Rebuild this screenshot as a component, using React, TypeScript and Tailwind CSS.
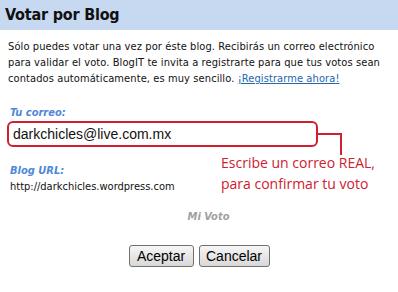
import React from 'react'

const body = { fontFamily: '"DejaVu Sans Condensed", "DejaVu Sans", sans-serif' }
const arial = { fontFamily: '"Liberation Sans", Arial, sans-serif' }

const App: React.FC = () => {
  return (
    <div className="w-[398px] h-[292px] bg-white overflow-hidden text-[#111]" style={body}>
      <div className="h-[30px] bg-[#c6d9f1] pl-[5px] flex items-center">
        <h1 className="text-[16px] font-bold leading-none tracking-[-0.2px]">Votar por Blog</h1>
      </div>

      <div className="relative px-[8px] pt-[9px]">
        <p className="text-[11px] leading-[16px] tracking-[0.1px] whitespace-nowrap">
          Sólo puedes votar una vez por éste blog. Recibirás un correo electrónico
          <br />
          para validar el voto. BlogIT te invita a registrarte para que tus votos sean
          <br />
          contados automáticamente, es muy sencillo.{' '}
          <a href="#" className="text-[#2466b0] underline">¡Registrarme ahora!</a>
        </p>

        <div className="mt-[18px] pl-[2px] text-[11px] leading-[16px] font-bold italic text-[#4d88d6]">
          Tu correo:
        </div>
        <div className="-ml-[1px] w-[311px] h-[26px] rounded-[6px] border-2 border-[#d0202f] flex items-center px-[4px]">
          <span className="text-[14px] leading-none" style={arial}>darkchicles@live.com.mx</span>
        </div>

        <div className="mt-[16px] pl-[2px] text-[11px] leading-[16px] font-bold italic text-[#4d88d6]">
          Blog URL:
        </div>
        <div className="pl-[2px] text-[11px] leading-[15px]">http://darkchicles.wordpress.com</div>

        <div className="mt-[15px] text-center text-[11px] leading-[16px] font-bold italic text-[#a0a0a0] pl-[19px]">
          Mi Voto
        </div>

        <div className="mt-[20px] flex justify-center gap-[5px]">
          <button
            className="w-[65px] h-[22px] rounded-[3px] border border-[#707070] bg-gradient-to-b from-[#f6f6f6] to-[#d8d8d8] text-[14px] text-black"
            style={arial}
          >
            Aceptar
          </button>
          <button
            className="w-[71px] h-[22px] rounded-[3px] border border-[#707070] bg-gradient-to-b from-[#f6f6f6] to-[#d8d8d8] text-[14px] text-black"
            style={arial}
          >
            Cancelar
          </button>
        </div>

        {/* red callout over the form */}
        <div className="absolute left-[317px] top-[103px] w-[25px] h-[22px] border-t-2 border-r-2 border-[#d0202f]" />
        <div
          className="absolute left-[221px] top-[122px] text-[14px] leading-[21px] text-[#d0202f]"
          style={{ fontFamily: '"Open Sans", sans-serif' }}
        >
          <div>Escribe un correo REAL,</div>
          <div>para confirmar tu voto</div>
        </div>
      </div>
    </div>
  )
}

export default App
